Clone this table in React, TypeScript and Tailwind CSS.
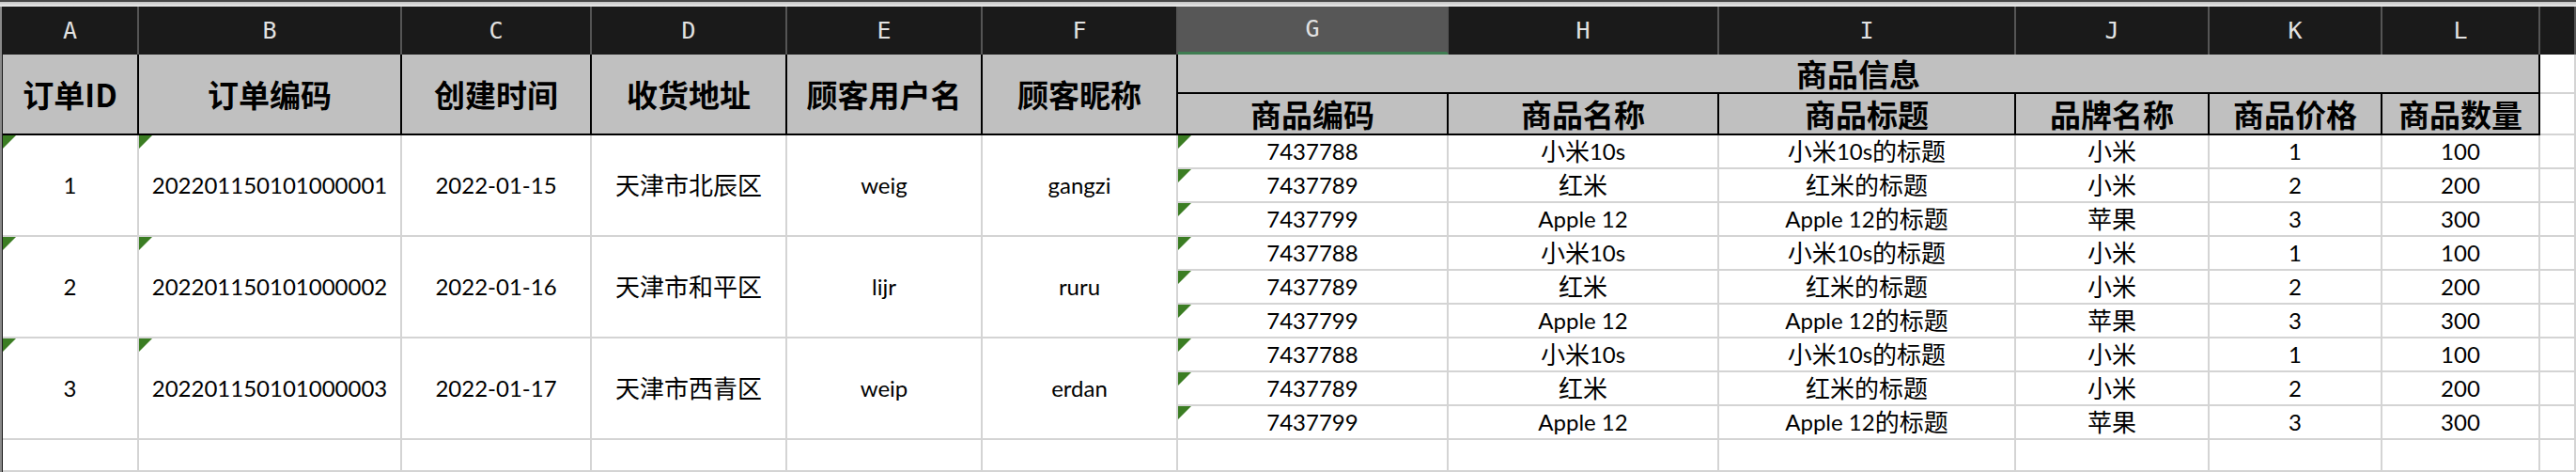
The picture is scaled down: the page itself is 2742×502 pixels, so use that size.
import clsx from 'clsx';

const letters = ['A', 'B', 'C', 'D', 'E', 'F', 'G', 'H', 'I', 'J', 'K', 'L', ''];

const orders = [
  { id: '1', code: '202201150101000001', date: '2022-01-15', addr: '天津市北辰区', user: 'weig', nick: 'gangzi' },
  { id: '2', code: '202201150101000002', date: '2022-01-16', addr: '天津市和平区', user: 'lijr', nick: 'ruru' },
  { id: '3', code: '202201150101000003', date: '2022-01-17', addr: '天津市西青区', user: 'weip', nick: 'erdan' },
];

const items = [
  ['7437788', '小米10s', '小米10s的标题', '小米', '1', '100'],
  ['7437789', '红米', '红米的标题', '小米', '2', '200'],
  ['7437799', 'Apple 12', 'Apple 12的标题', '苹果', '3', '300'],
];

// CJK runs are set a bit larger than the latin text, like Calibri + PingFang in the sheet
function Mixed({ text }: { text: string }) {
  const parts = text.split(/([\u4e00-\u9fff]+)/);
  return (
    <>
      {parts.map((p, i) =>
        /[\u4e00-\u9fff]/.test(p) ? (
          <span key={i} className="text-[26px]">
            {p}
          </span>
        ) : (
          p
        )
      )}
    </>
  );
}

function Cell({ text, flag, className }: { text?: string; flag?: boolean; className?: string }) {
  return (
    <div
      className={clsx(
        'relative flex items-center justify-center overflow-hidden whitespace-nowrap border-r-2 border-b-2 border-[#d4d4d4] bg-white text-[24px] text-black',
        className
      )}
    >
      {flag && (
        <span className="absolute left-0 top-0 h-0 w-0 border-t-[14px] border-r-[14px] border-t-[#3b7d23] border-r-transparent" />
      )}
      {text && <Mixed text={text} />}
    </div>
  );
}

function Head({ text, className }: { text: string; className?: string }) {
  return (
    <div
      className={clsx(
        'flex items-center justify-center whitespace-nowrap border-r-2 border-b-2 border-black bg-[#c0c0c0] text-[33px] font-bold leading-none text-black',
        className
      )}
    >
      {text}
    </div>
  );
}

export default function App() {
  return (
    <div className="h-[502px] w-[2742px] overflow-hidden bg-white font-['Lato','Noto_Sans_CJK_SC',sans-serif]">
      <div className="h-[7px] border-t-2 border-[#474747] bg-gradient-to-b from-[#c4c4c4] to-[#ececec]" />
      <div className="flex">
        <div className="w-[3px] shrink-0 border-l-2 border-[#8a8a8a] bg-[#1a1a1a]" />
        <div className="flex-1">
          {/* column letters */}
          <div className="grid h-[51px] grid-cols-[145px_280px_202px_208px_208px_208px_288px_288px_316px_206px_184px_168px_1fr] bg-[#1a1a1a] font-['DejaVu_Sans_Mono',monospace] text-[25px] text-[#e2e2e2]">
            {letters.map((l) => (
              <div
                key={l || 'm'}
                className={clsx(
                  'flex items-center justify-center border-r-2 border-[#555555]',
                  l === 'G' && 'border-b-[3px] border-b-[#3f7d52] bg-[#575757]'
                )}
              >
                {l}
              </div>
            ))}
          </div>

          {/* sheet body */}
          <div className="grid h-[444px] grid-cols-[145px_280px_202px_208px_208px_208px_288px_288px_316px_206px_184px_168px_1fr] grid-rows-[42px_44px_repeat(9,36px)_1fr] font-['Noto_Sans_CJK_SC',sans-serif]">
            <Head text="订单ID" className="row-span-2" />
            <Head text="订单编码" className="row-span-2" />
            <Head text="创建时间" className="row-span-2" />
            <Head text="收货地址" className="row-span-2" />
            <Head text="顾客用户名" className="row-span-2" />
            <Head text="顾客昵称" className="row-span-2" />
            <Head text="商品信息" className="col-span-6" />
            <Cell />
            <Head text="商品编码" />
            <Head text="商品名称" />
            <Head text="商品标题" />
            <Head text="品牌名称" />
            <Head text="商品价格" />
            <Head text="商品数量" />
            <Cell />

            {orders.map((o) => (
              <div key={o.id} className="contents font-['Lato','Noto_Sans_CJK_SC',sans-serif]">
                <Cell text={o.id} flag className="row-span-3" />
                <Cell text={o.code} flag className="row-span-3" />
                <Cell text={o.date} className="row-span-3" />
                <Cell text={o.addr} className="row-span-3" />
                <Cell text={o.user} className="row-span-3" />
                <Cell text={o.nick} className="row-span-3" />
                {items.map((it) => (
                  <div key={it[0]} className="contents">
                    {it.map((v, i) => (
                      <Cell key={i} text={v} flag={i === 0} />
                    ))}
                    <Cell />
                  </div>
                ))}
              </div>
            ))}

            {letters.map((l) => (
              <Cell key={'e' + l} />
            ))}
          </div>
        </div>
      </div>
    </div>
  );
}
